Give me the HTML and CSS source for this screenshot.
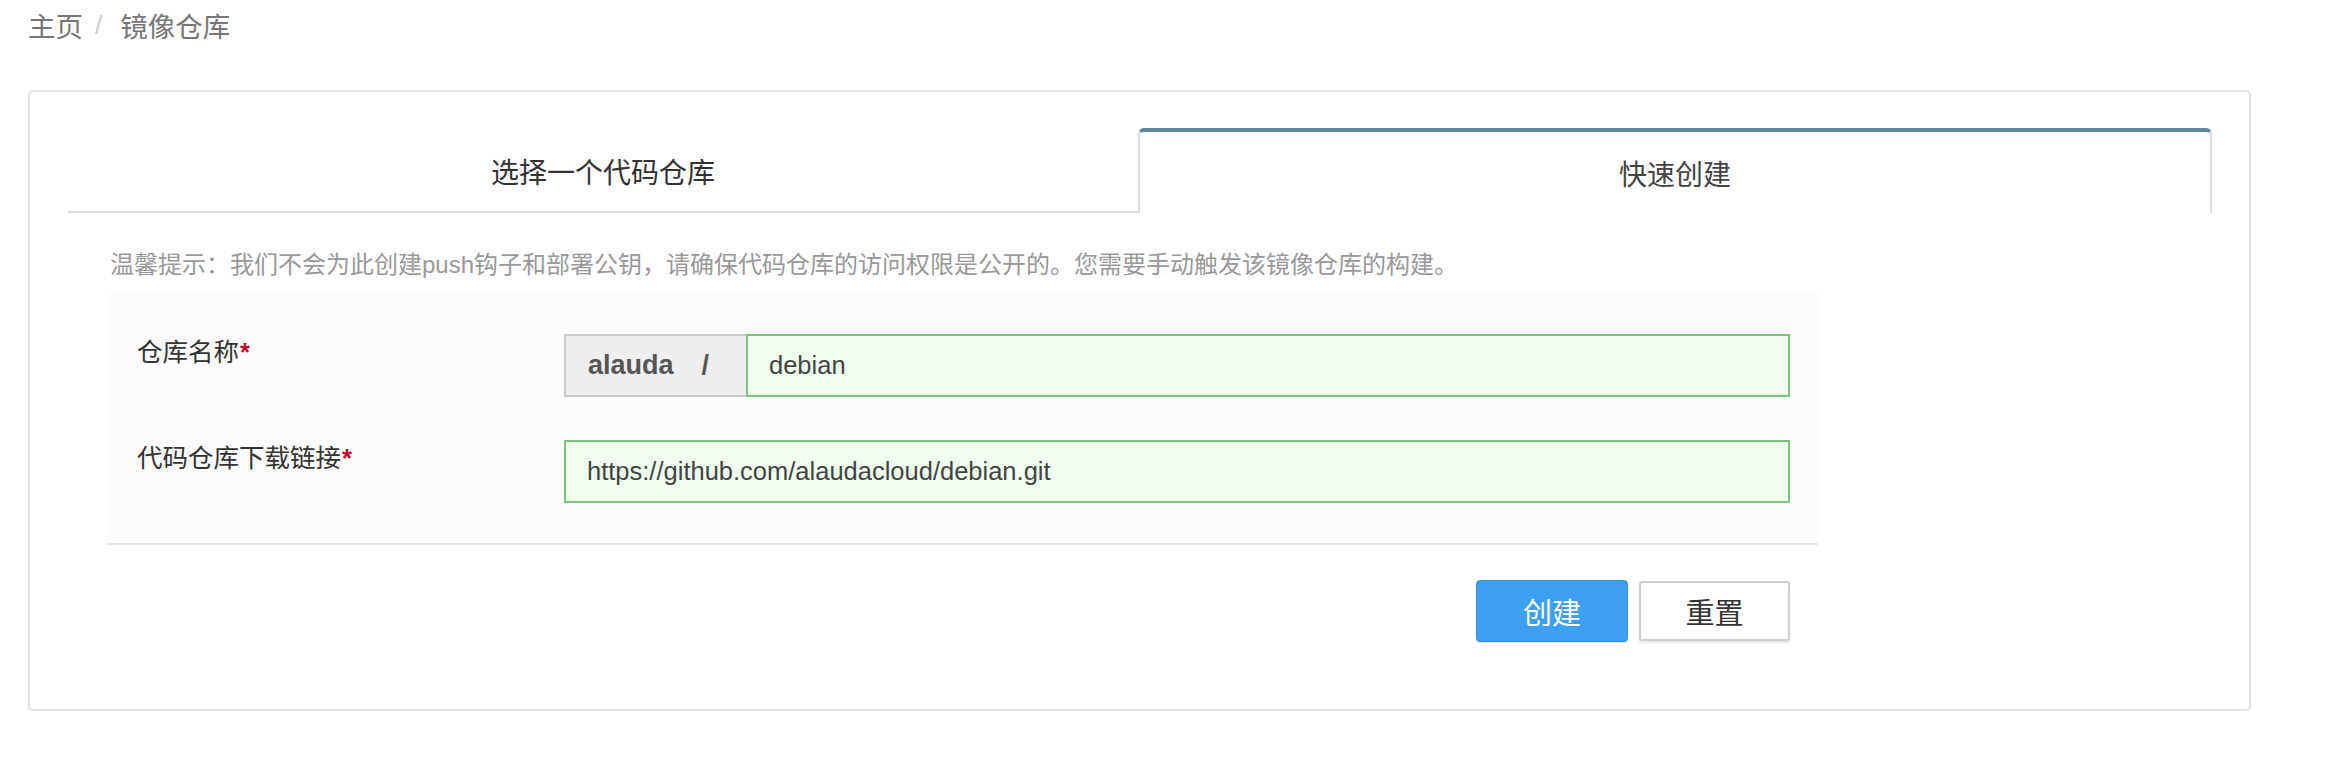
FILE: index.html
```html
<!DOCTYPE html>
<html lang="zh-CN">
<head>
<meta charset="utf-8">
<title>镜像仓库</title>
<link rel="stylesheet" href="styles.css">
</head>
<body>
<div class="page">
  <nav class="breadcrumb">
    <span class="crumb">主页</span><span class="crumb-sep">/</span><span class="crumb current">镜像仓库</span>
  </nav>
  <section class="card">
    <div class="tabs">
      <div class="tab">选择一个代码仓库</div>
      <div class="tab active">快速创建</div>
    </div>
    <div class="content">
      <p class="hint">温馨提示：我们不会为此创建push钩子和部署公钥，请确保代码仓库的访问权限是公开的。您需要手动触发该镜像仓库的构建。</p>
      <div class="form">
        <div class="row">
          <label class="label">仓库名称<span class="req">*</span></label>
          <div class="input-group">
            <span class="addon">alauda<span class="slash">/</span></span>
            <input class="input" type="text" value="debian">
          </div>
        </div>
        <div class="row">
          <label class="label">代码仓库下载链接<span class="req">*</span></label>
          <div class="input-group">
            <input class="input" type="text" value="https://github.com/alaudacloud/debian.git">
          </div>
        </div>
      </div>
      <div class="actions">
        <button class="btn btn-primary" type="button">创建</button>
        <button class="btn btn-default" type="button">重置</button>
      </div>
    </div>
  </section>
</div>
</body>
</html>
```

FILE: styles.css
```css
* { box-sizing: border-box; }

html, body {
  margin: 0;
  padding: 0;
  background: #ffffff;
}

body {
  font-family: "Liberation Sans", "Noto Sans CJK SC", sans-serif;
  color: #333;
}

.page {
  padding: 0 77px 0 28px;
}

.breadcrumb {
  display: flex;
  align-items: center;
  height: 90px;
  padding-bottom: 40px;
  font-family: "Noto Sans CJK SC", sans-serif;
  font-size: 27.5px;
  line-height: 38px;
  color: #777;
}

.crumb-sep {
  color: #ccc;
  font-family: "Liberation Sans", sans-serif;
  font-size: 26px;
  margin: 0 18px 0 12px;
}

.card {
  border: 2px solid #e3e3e3;
  border-radius: 6px;
  box-shadow: 0 2px 3px rgba(0, 0, 0, 0.08);
  padding: 36px 37px 67px 38px;
  background: #fff;
}

.tabs {
  display: flex;
  height: 85px;
}

.tab {
  flex: 1;
  display: flex;
  align-items: center;
  justify-content: center;
  font-family: "Noto Sans CJK SC", sans-serif;
  font-size: 28px;
  color: #333;
  border-bottom: 2px solid #ddd;
  padding-top: 2px;
}

.tab.active {
  border-bottom: none;
  border-top: 4px solid #5a8a9e;
  border-left: 2px solid #ddd;
  border-right: 2px solid #ddd;
  border-radius: 6px 6px 0 0;
  color: #444;
  padding-top: 0;
}

.content {
  padding: 0 0 0 39px;
}

.hint {
  margin: 35px 0 9px 3px;
  font-size: 24px;
  line-height: 34px;
  color: #999;
}

.form {
  width: 1711px;
  background: #fcfcfc;
  padding: 43px 28px 40px 30px;
  border-bottom: 2px solid #e6e6e6;
  display: flex;
  flex-direction: column;
  gap: 43px;
}

.row {
  display: flex;
  align-items: flex-start;
}

.label {
  width: 427px;
  flex: none;
  font-family: "Noto Sans CJK SC", sans-serif;
  font-size: 25.5px;
  line-height: 32px;
  color: #333;
}

.req {
  color: #c7042b;
  font-family: "Liberation Sans", sans-serif;
  font-weight: bold;
  margin-left: 1px;
}

.input-group {
  flex: 1;
  display: flex;
  height: 63px;
}

.addon {
  display: flex;
  align-items: center;
  width: 182px;
  flex: none;
  padding: 0 21px 0 22px;
  background: #eeeeee;
  border: 2px solid #cccccc;
  border-right: none;
  font-family: "Liberation Sans", sans-serif;
  font-weight: bold;
  font-size: 27px;
  color: #555;
}

.slash {
  margin-left: 28px;
}

.input {
  flex: 1;
  min-width: 0;
  height: 63px;
  margin: 0;
  padding: 0 20px 0 21px;
  border: 2px solid #7dc47d;
  background: #f0fff0;
  font-family: "Liberation Sans", sans-serif;
  font-size: 25.5px;
  color: #444;
  outline: none;
  border-radius: 0;
}

.actions {
  width: 1711px;
  display: flex;
  justify-content: flex-end;
  gap: 11px;
  padding-right: 28px;
  margin-top: 35px;
}

.btn {
  height: 62px;
  width: 152px;
  margin: 0;
  font-family: "Noto Sans CJK SC", sans-serif;
  font-size: 29px;
  line-height: 1;
  cursor: pointer;
}

.btn-primary {
  background: #3d9ff0;
  border: 1px solid #3592e2;
  border-radius: 4px;
  color: #fff;
  box-shadow: 0 1px 1px rgba(0, 0, 0, 0.1);
}

.btn-default {
  height: 60px;
  margin-top: 1px;
  width: 151px;
  background: #fff;
  border: 2px solid #cfcfcf;
  border-radius: 3px;
  color: #333;
  box-shadow: 0 2px 2px rgba(0, 0, 0, 0.1);
}
```
